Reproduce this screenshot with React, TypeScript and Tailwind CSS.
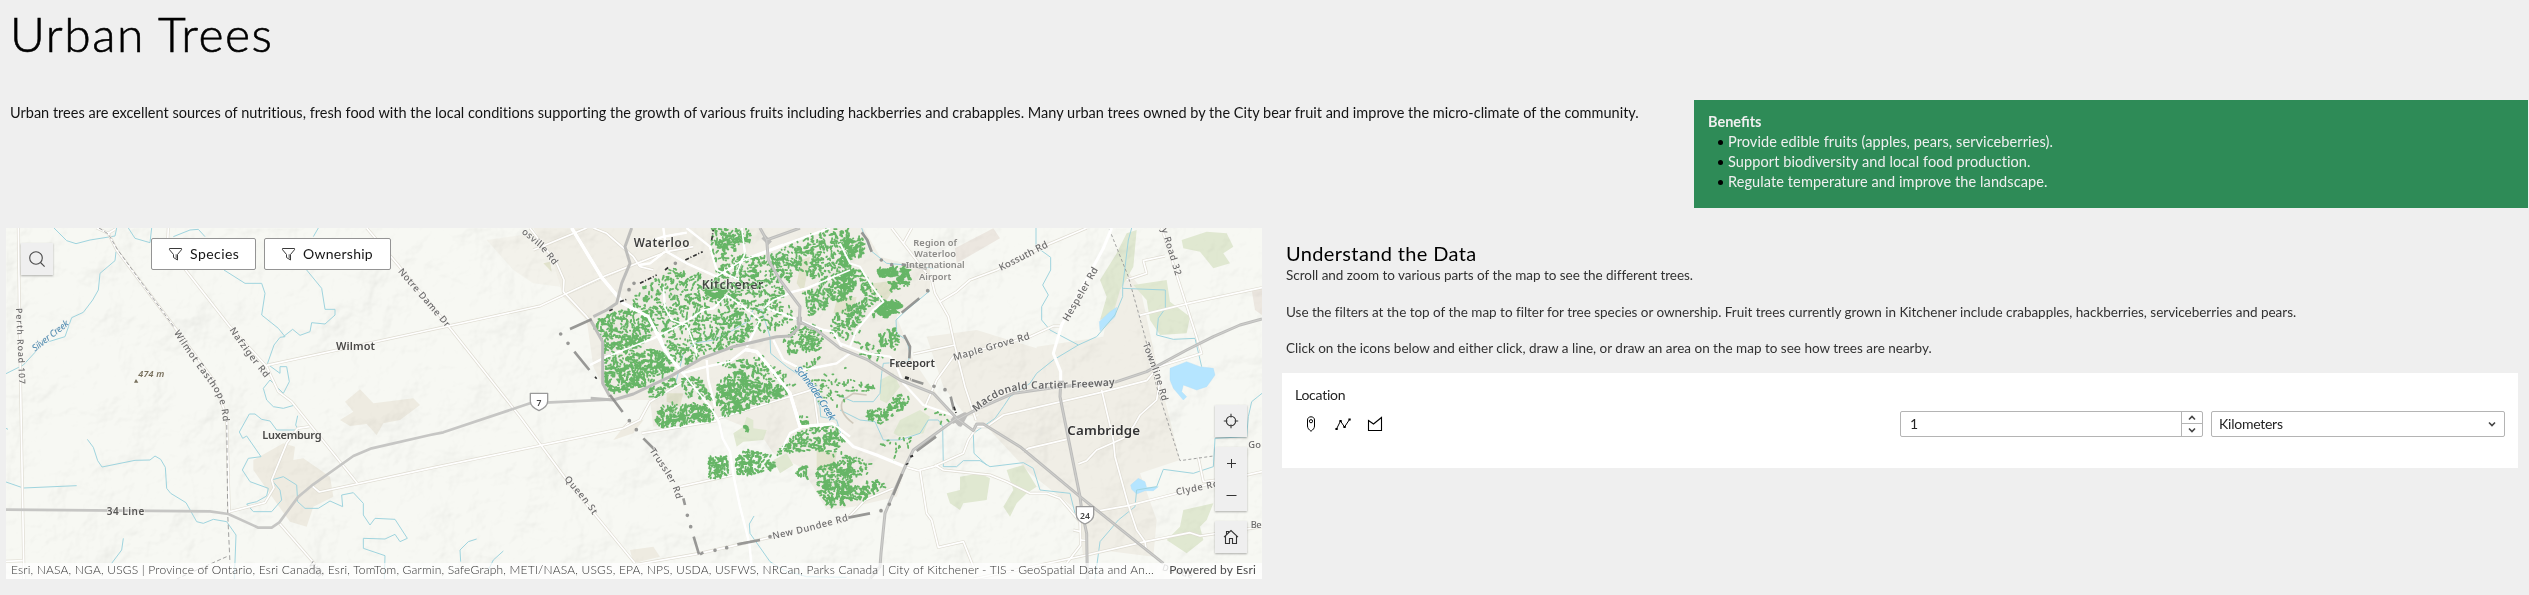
import React from "react";

type Poly = { dx?: number; d: number; p: number[] };

const TREE_AREAS: Poly[] = [
  { d: 19, p: [512, 298, 600, 273, 690, 262, 718, 330, 640, 395, 555, 408, 545, 355] },
  { d: 26, p: [555, 415, 690, 385, 740, 400, 765, 445, 690, 490, 590, 527, 555, 500] },
  { d: 26, p: [680, 512, 765, 470, 768, 500, 700, 537] },
  { d: 11, p: [640, 225, 700, 180, 760, 145, 850, 165, 885, 190, 870, 290, 740, 330, 700, 280, 640, 262] },
  { d: 13, p: [720, 330, 870, 290, 965, 260, 1000, 330, 960, 380, 860, 400, 790, 440, 750, 410] },
  { d: 32, p: [855, 210, 880, 195, 925, 205, 900, 240, 865, 240] },
  { d: 19, p: [875, 24, 990, 24, 995, 60, 940, 70, 900, 100, 870, 70] },
  { d: 10, p: [860, 80, 980, 60, 985, 110, 900, 150] },
  { d: 12, p: [890, 150, 960, 110, 1050, 110, 1060, 170, 1100, 220, 1060, 270, 1000, 290, 900, 280, 870, 210] },
  { d: 6, p: [960, 280, 1100, 240, 1140, 300, 1040, 340, 960, 350] },
  { d: 15, p: [1050, 100, 1140, 60, 1220, 24, 1290, 30, 1290, 170, 1200, 190, 1130, 150, 1090, 210, 1050, 150] },
  { d: 19, p: [1150, 220, 1290, 150, 1300, 230, 1240, 250, 1170, 290] },
  { d: 11, p: [1250, 280, 1340, 230, 1320, 340, 1260, 370, 1220, 330] },
  { dx: 1260, d: 28, p: [0, 60, 70, 52, 82, 95, 20, 130, 0, 110] },
  { dx: 1260, d: 18, p: [0, 130, 60, 140, 90, 190, 140, 240, 90, 260, 60, 200, 0, 240] },
  { dx: 1260, d: 12, p: [20, 250, 90, 250, 60, 300, 20, 330] },
  { dx: 1260, d: 50, p: [110, 150, 200, 138, 214, 180, 180, 186, 160, 165, 120, 175] },
  { dx: 1260, d: 18, p: [140, 185, 210, 180, 200, 205, 150, 215] },
  { dx: 1260, d: 70, p: [95, 285, 130, 250, 180, 240, 190, 262, 140, 295] },
  { dx: 1260, d: 26, p: [115, 350, 160, 323, 180, 350, 165, 390, 120, 375] },
  { dx: 1260, d: 8, p: [30, 350, 120, 380, 135, 420, 70, 418] },
  { d: 16, p: [1085, 370, 1120, 320, 1180, 310, 1220, 350, 1200, 390, 1150, 400, 1100, 400] },
  { d: 16, p: [1130, 440, 1200, 410, 1200, 425, 1150, 455] },
  { d: 28, p: [890, 490, 950, 450, 1010, 480, 1095, 500, 1105, 525, 920, 590, 890, 570] },
  { d: 15, p: [780, 480, 830, 460, 880, 540, 800, 530] },
  { d: 12, p: [890, 430, 1030, 410, 1130, 500, 1010, 480] },
  { d: 28, p: [705, 600, 730, 555, 870, 550, 888, 600, 720, 624] },
  { d: 34, p: [865, 715, 920, 705, 928, 765, 870, 778] },
  { d: 28, p: [945, 725, 980, 685, 1060, 710, 1060, 755, 950, 765] },
  { d: 20, p: [1065, 705, 1110, 650, 1150, 625, 1250, 615, 1275, 660, 1240, 705, 1180, 690, 1110, 700] },
  { d: 22, p: [1190, 745, 1290, 710, 1300, 840, 1220, 868, 1190, 800] },
  { dx: 1260, d: 14, p: [0, 700, 80, 720, 100, 750, 30, 790] },
  { dx: 1260, d: 26, p: [0, 790, 50, 800, 110, 775, 132, 800, 70, 842, 0, 830] },
  { d: 34, p: [1138, 588, 1168, 592, 1165, 622, 1142, 615] },
  { d: 34, p: [1132, 742, 1160, 740, 1162, 775, 1135, 770] },
  { d: 50, p: [972, 618, 986, 620, 985, 636, 972, 634] },
  { dx: 1260, d: 44, p: [80, 570, 150, 560, 160, 590, 120, 612, 90, 600] },
  { dx: 1260, d: 24, p: [140, 560, 180, 520, 212, 530, 190, 575] },
  { dx: 1260, d: 8, p: [10, 480, 50, 480, 110, 500, 100, 515, 20, 512] },
  { dx: 1260, d: 4, p: [100, 670, 240, 640, 160, 725] },
  { dx: 1260, d: 4, p: [250, 560, 340, 590, 320, 620] },
  { d: 2, p: [1160, 480, 1280, 480, 1270, 560, 1200, 560] },
  { d: 3, p: [1150, 470, 1290, 440, 1290, 530, 1200, 540] },
];

function rng(seed: number) {
  let s = seed;
  return () => {
    s = (s + 0x6d2b79f5) | 0;
    let t = Math.imul(s ^ (s >>> 15), 1 | s);
    t = (t + Math.imul(t ^ (t >>> 7), 61 | t)) ^ t;
    return ((t ^ (t >>> 14)) >>> 0) / 4294967296;
  };
}

function hash(x: number, y: number) {
  const v = Math.sin(x * 127.1 + y * 311.7) * 43758.5453;
  return v - Math.floor(v);
}

function noise(x: number, y: number) {
  const s = 18;
  const gx = Math.floor(x / s);
  const gy = Math.floor(y / s);
  let fx = x / s - gx;
  let fy = y / s - gy;
  fx = fx * fx * (3 - 2 * fx);
  fy = fy * fy * (3 - 2 * fy);
  const a = hash(gx, gy) * (1 - fx) + hash(gx + 1, gy) * fx;
  const b = hash(gx, gy + 1) * (1 - fx) + hash(gx + 1, gy + 1) * fx;
  return a * (1 - fy) + b * fy;
}

function inside(p: number[], x: number, y: number) {
  let r = false;
  for (let i = 0, j = p.length - 2; i < p.length; j = i, i += 2) {
    if (p[i + 1] > y !== p[j + 1] > y && x < ((p[j] - p[i]) * (y - p[i + 1])) / (p[j + 1] - p[i + 1]) + p[i]) r = !r;
  }
  return r;
}

function treePath() {
  const rand = rng(7);
  const out: string[] = [];
  for (const { dx = 0, d, p } of TREE_AREAS) {
    const xs = p.filter((_, i) => i % 2 === 0);
    const ys = p.filter((_, i) => i % 2 === 1);
    const x0 = Math.min(...xs);
    const y0 = Math.min(...ys);
    const w = Math.max(...xs) - x0;
    const h = Math.max(...ys) - y0;
    const n = Math.round((w * h * d * 1.75) / 1000);
    for (let i = 0; i < n; i++) {
      const x = x0 + rand() * w;
      const y = y0 + rand() * h;
      if (!inside(p, x, y)) continue;
      const gx = noise(x + 1, y) - noise(x - 1, y);
      const gy = noise(x, y + 1) - noise(x, y - 1);
      const v = Math.abs(noise(x, y) - 0.5);
      if (v > 0.16 && rand() > 0.32) continue;
      const m = Math.hypot(gx, gy) || 1;
      const len = 0.5 + rand() * 8;
      out.push(`M${(x + dx).toFixed(1)} ${y.toFixed(1)}l${((-gy / m) * len).toFixed(1)} ${((gx / m) * len).toFixed(1)}`);
    }
  }
  return out.join("");
}

const TREES = treePath();

const MINOR_W = [
  "M55 24L60 400L72 1077",
  "M290 24L325 40L350 90L440 210L530 330L640 480L680 590L688 880",
  "M325 40L345 28",
  "M505 24L502 80L690 320L800 440L835 515L875 545L1072 790",
  "M800 436L1290 330L1620 258L1680 230L1930 120",
  "M690 875L795 848L822 803L815 780L860 670L893 625L928 620",
  "M935 797L958 816L1290 745L1870 625L1890 605",
  "M840 912L960 1050",
  "M1100 24L1190 130L1345 318L1560 590L1700 780L1905 1030",
  "M18 1024L68 1022",
];

const MINOR_C = [
  "M340 90L500 24M330 24L410 130L432 180L430 215L500 290L548 350",
  "M430 225L545 172L740 95L820 80",
  "M520 24L560 40L600 75L640 110L660 140L700 150",
  "M780 800L940 765",
  "M840 1000L640 1035M840 1000L1060 950",
  "M665 640L890 602",
  "M610 625L660 600L690 545L800 480",
  "M895 595L1180 508L1195 618",
];

const MINOR_E = [
  "M155 24L190 70L215 24M190 70L275 180L285 220L325 290L345 380L375 500L408 600",
  "M300 245L350 215L390 180L470 150L620 75L740 24",
  "M255 560L290 480L340 410L570 350L640 318L660 318",
  "M220 402L345 375",
  "M400 620L440 620L490 585L780 518L920 482L955 440L1085 400L1060 320L965 24",
  "M895 287L1045 250L1266 203",
  "M860 180L920 160L910 122L975 108",
  "M550 695L565 685L680 658",
  "M715 732L740 722L770 690L850 655L880 620L900 585L950 540L960 480",
  "M785 510L820 660L825 710L865 855L890 930L915 965L918 985",
  "M780 872L865 857L1010 820L1130 785L1266 755",
  "M740 1005L915 965L1050 938L1080 948L1266 920",
  "M740 1005L600 1035L400 1077",
  "M240 752L260 880L275 900L295 982L370 965L400 1040",
  "M200 742L235 752L280 740L370 700L385 660L405 630M285 735L310 750L450 765L500 785L570 820L620 820L660 835L720 905L722 975L680 1030",
  "M18 900L75 840L160 805",
  "M700 930L722 935M722 960L740 962",
  "M1075 712L1090 785L1130 780",
];

const MAJOR_C = [
  "M455 24L545 172L610 250L685 290L720 350L740 400L785 455L870 560L897 605L908 655L930 695L940 765L960 860L988 970L995 1040",
  "M730 24L740 95L800 130L890 170L960 125L1090 75L1230 24",
  "M800 24L870 80L890 150L960 180",
  "M700 60L730 50L800 38",
  "M655 135L690 130L735 95",
  "M510 435L560 410L700 355L790 310L850 270L880 265L920 225L970 260L1020 300L980 380",
  "M730 200L735 265L755 300L800 315L825 380L830 410",
  "M785 460L860 440L930 425L975 390L1010 395L1060 455L1110 520L1130 580L1140 620L1240 612L1290 650",
  "M860 420L865 480L885 560",
  "M965 24L975 100L950 160",
  "M1040 265L1110 290L1210 330L1240 335L1265 380",
  "M1030 265L1060 240L1120 215L1160 205L1290 150",
  "M1060 360L1090 420L1150 450L1250 430L1290 400",
  "M1145 622L1110 640L1085 690",
];

const MAJOR_E = [
  "M815 24L790 85L665 315L640 400L662 455L662 500",
  "M0 370L80 400L150 410L170 440L190 490L250 555L350 590",
  "M0 640L40 680L110 705L190 738",
  "M30 380L50 330L100 270L130 245L90 190L60 140L30 130L0 70",
];

const STREAMS = [
  "M162 24L200 62L228 71L270 60L345 48L350 24M348 95L345 122L300 160L295 210L278 240L250 277L215 293L195 350L130 370L70 435L18 461",
  "M262 658L280 682L293 722L306 741L405 721L450 720L465 708L482 718L496 742L500 805L512 820L558 848L590 905L610 910L640 898L680 905L708 945L703 1077",
  "M18 786L70 804L230 797M370 955L365 990L335 1030M18 625L24 628",
  "M385 24L405 55L450 68L455 24M520 50L570 30L595 28L615 50M955 24L940 50M672 150L735 190L785 190L795 220L785 285L835 325L855 350L840 352L822 375L802 432L840 460L840 440L860 440L868 485L850 520L810 480L790 505L800 540L820 560L850 565L885 555",
  "M920 150L965 205L975 268L1005 268L1005 285L975 312L935 308L930 335L900 346L878 328L850 350",
  "M893 587L887 615L895 630L830 630L810 603L785 598L765 582L748 582L718 636L728 655L740 648L783 710L745 715L727 750L750 785L805 805L800 828L770 845L740 852L760 875L815 875L845 840L840 810L815 780L850 770L890 795L893 845L915 865L955 865L990 843L1028 860L1025 825L1060 818L1090 850L1090 885L1110 915L1125 895L1185 898L1222 955L1200 965L1185 943L1155 957L1090 955L1090 985L1155 1007L1153 1077",
  "M1430 957L1405 965L1380 990L1382 1025M1510 993L1480 1020L1465 1050M2262 888L2248 912L2250 940L2310 1025L2350 1050L2420 1070L2540 1072",
  "M2285 270L2260 265L2250 300L2200 330L2140 360L2080 370L2050 400L2040 440L2025 495M2285 270L2310 350L2312 400L2360 440L2420 480L2460 560L2462 590L2510 600L2525 650",
  "M2585 24L2610 90L2660 130L2720 135L2800 145",
  "M2790 212L2720 270L2688 300L2690 340L2720 360L2730 400L2725 425L2650 430L2645 460L2640 520L2620 545L2560 545L2525 530",
  "M2520 570L2580 600L2625 605L2650 660L2700 660L2760 640L2785 600L2815 600L2828 620L2830 740L2870 740L2890 722L2940 722L2970 740L3070 728L3100 745L3120 810L3210 820L3225 880",
  "M3108 24L3108 80L3152 112L3152 150L3128 195L3145 225L3125 260L3125 300L3150 330L3235 375L3290 350L3345 285L3368 230L3368 200L3385 60L3395 24M3235 375L3160 420L3110 460L3090 490L3030 530L3010 560L2985 595L2920 640L2922 700L2960 735",
  "M3368 205L3496 210L3496 265L3475 295L3470 345L3520 358L3585 355L3605 440M3786 520L3755 545L3745 590L3740 650L3645 655L3640 740L3580 760L3490 748L3470 800L3410 810L3405 860L3355 900L3330 930L3300 965L3285 1077",
];

const GREYS = [
  "M1772 535L1840 540L1900 522L2010 470L2105 415L2200 380L2330 350L2370 348L2395 325L2400 300",
  "M1895 24L1875 80L1890 130L1865 190L1850 250L1820 270L1780 290",
  "M1770 297L1808 365L1808 490L1830 530",
  "M2280 24L2300 60L2305 120L2340 180L2400 260L2398 305L2450 330L2520 385L2600 418L2700 480L2800 520L2870 595L2920 632L2930 612L2950 612L3060 680L3240 830L3490 1030",
  "M2300 60L2400 24",
  "M2870 600L2930 568L3040 520L3180 500L3350 485L3440 455L3560 390L3640 350L3720 315L3786 297",
  "M3182 490L3180 530L3240 830L3245 870L3260 940L3262 1077",
  "M2870 595L2740 690L2720 730L2680 820L2655 880L2643 1000L2640 1040L2610 1077",
];

function Roads({ paths, inner, outer }: { paths: string[]; inner: number; outer: number }) {
  return (
    <>
      <g stroke="#dfdcd2" strokeWidth={outer}>
        {paths.map((d) => <path key={d} d={d} />)}
      </g>
      <g stroke="#fff" strokeWidth={inner}>
        {paths.map((d) => <path key={d} d={d} />)}
      </g>
    </>
  );
}

type LabelProps = { x: number; y: number; len: number; size: number; bold?: boolean; color?: string; rot?: number; italic?: boolean; children: string };

function Label({ x, y, len, size, bold, color = "#6b6b6b", rot = 0, italic, children }: LabelProps) {
  return (
    <text
      x={x}
      y={y}
      textLength={len}
      fontSize={size}
      fontWeight={bold ? 600 : 500}
      fontStyle={italic ? "italic" : "normal"}
      fill={color}
      stroke="#f7f6f1"
      strokeWidth="5"
      strokeOpacity="0.75"
      paintOrder="stroke"
      strokeLinejoin="round"
      transform={`rotate(${rot} ${x} ${y})`}
    >
      {children}
    </text>
  );
}

function CurvedLabel({ id, d, len, size, bold, color = "#6b6b6b", italic, children }: { id: string; d: string; len: number; size: number; bold?: boolean; color?: string; italic?: boolean; children: string }) {
  return (
    <>
      <path id={id} d={d} fill="none" />
      <text
        fontSize={size}
        fontWeight={bold ? 600 : 500}
        fontStyle={italic ? "italic" : "normal"}
        fill={color}
        stroke="#f7f6f1"
        strokeWidth="5"
        strokeOpacity="0.75"
        paintOrder="stroke"
        strokeLinejoin="round"
        textLength={len}
      >
        <textPath href={`#${id}`}>{children}</textPath>
      </text>
    </>
  );
}

function Shield({ x, y, children }: { x: number; y: number; children: string }) {
  return (
    <g transform={`translate(${x} ${y})`}>
      <path d="M-26 -26H26V-2C26 12 14 20 0 26C-14 20 -26 12 -26 -2Z" fill="#fff" stroke="#9a9a9a" strokeWidth="4" />
      <text y="11" textAnchor="middle" fontSize="26" fontWeight="600" fill="#444">{children}</text>
    </g>
  );
}

function BaseMap() {
  return (
    <svg viewBox="18 24 3768 1053" className="block h-[351px] w-[1256px] font-['Noto_Sans',sans-serif]" fill="none" strokeLinejoin="round">
      <defs>
        <filter id="relief" x="0" y="0" width="100%" height="100%">
          <feTurbulence type="fractalNoise" baseFrequency="0.0045" numOctaves="5" seed="11" />
          <feDiffuseLighting surfaceScale="46" diffuseConstant="1.15" lightingColor="#ffffff">
            <feDistantLight azimuth="225" elevation="60" />
          </feDiffuseLighting>
        </filter>
      </defs>
      <rect x="18" y="24" width="3768" height="1053" fill="#f7f8f3" />

      <g fill="#f0eee6">
        <path d="M1600 24H2590L2640 110L2790 150L2790 210L2690 290L2740 420L2780 480L2860 590L2730 700L2690 830L2560 860L2480 870L2440 800L2400 740L2320 700L2280 640L2160 590L1960 620L1950 540L1830 540L1780 440L1760 300L1690 230L1660 130Z" />
        <path d="M3110 380L3310 350L3350 110L3420 200L3480 480L3540 720L3420 760L3470 900L3460 1010L3300 990L3250 1010L3230 870L3090 760L2960 620L2920 600L2960 560L3100 540Z" />
        <path d="M2780 350L2930 330L3060 370L3160 400L3160 540L2900 590L2830 500Z" />
        <path d="M1460 60L1600 40L1660 110L1680 200L1600 190L1540 150Z" opacity="0.6" />
      </g>
      <g fill="#eeebe1">
        <path d="M760 720L850 670L885 680L880 720L910 715L990 770L1000 830L940 860L920 920L870 905L830 850L760 750Z" />
        <path d="M1020 600L1060 575L1035 545L1080 508L1120 550L1240 535L1260 555L1200 600L1150 610L1130 645L1100 612L1050 618Z" />
        <path d="M1840 660L1900 640L1930 600L1880 610ZM1890 990L1960 980L1980 1010L1900 1030Z" />
        <path d="M2865 85L2980 25L3000 55L2870 130ZM3755 210L3786 205V285L3765 270Z" fill="#ece7e0" />
      </g>
      <g fill="#e0e8d1">
        <path d="M3545 60L3620 35L3680 40L3700 80L3670 100L3690 130L3640 145L3600 95L3550 85Z" />
        <path d="M3400 195L3500 180L3510 245L3570 290L3560 340L3480 345L3450 300L3440 240Z" />
        <path d="M3380 40L3410 30L3400 140L3360 210L3340 280L3300 300L3320 230L3300 180L3350 100Z" />
        <path d="M2880 770L2940 760L2970 775L2960 840L2890 850L2880 870L2850 850L2840 820L2880 810ZM3020 750L3070 735L3110 800L3080 820L3050 850L3030 890L3010 860L3040 810Z" />
        <path d="M3550 870L3640 850L3620 900L3600 920L3610 960L3560 1000L3500 960L3540 920ZM2700 600L2760 570L2790 590L2770 640L2700 650L2680 640Z" />
        <path d="M2240 590L2260 600L2260 625L2300 630L2290 660L2230 665L2210 680L2200 640L2230 620ZM2320 720L2360 700L2380 735L2340 760ZM2640 480L2680 460L2700 500L2660 550L2640 540Z" />
        <path d="M2430 110L2410 220L2390 190L2405 120ZM2510 240L2570 230L2560 280L2500 280ZM2620 190L2700 180L2660 240L2600 210Z" fill="#e2e3cd" />
        <path d="M2450 690L2510 700L2500 760L2450 745ZM2000 520L2050 520L2040 560L2000 545ZM1630 130L1650 125L1655 155Z" fill="#e2e3cd" />
      </g>
      <rect x="18" y="24" width="3768" height="1053" filter="url(#relief)" className="opacity-[0.12] mix-blend-multiply" />

      <g fill="#b5e5ff" stroke="#a9dcf7" strokeWidth="1">
        <path d="M3510 445L3560 425L3600 440L3640 445L3645 465L3620 500L3590 510L3550 495L3545 515L3560 530L3550 540L3520 505L3510 480Z" />
        <path d="M3298 305L3330 275L3350 262L3345 290L3300 333Z" />
        <path d="M3392 795L3415 775L3435 785L3440 803L3475 800L3460 812L3435 812L3410 822L3395 808Z" />
      </g>
      <g stroke="#9fd4de" strokeWidth="3">
        {STREAMS.map((d) => <path key={d} d={d} />)}
      </g>
      <path d="M2530 540L2560 520L2600 525M2530 540C2515 560 2530 590 2560 610" stroke="#cfc9bc" strokeWidth="5" />

      <Roads paths={MINOR_W} inner={5} outer={9} />
      <g transform="translate(1260 0)"><Roads paths={MINOR_C} inner={5} outer={9} /></g>
      <g transform="translate(2520 0)"><Roads paths={MINOR_E} inner={5} outer={9} /></g>
      <g stroke="#909090" strokeWidth="2.5" strokeDasharray="12 7">
        <path d="M297 24L325 42L352 88L525 325" />
        <path d="M680 592L683 880L690 1030" strokeDasharray="14 9" />
        <path d="M530 1077L680 1010" />
        <path d="M3328 28L3385 170L3435 350L3470 500L3540 722L3640 708" strokeDasharray="9 7" />
      </g>

      <g stroke="#c6c6c4" strokeWidth="8">
        <path d="M18 869L630 874L685 882L775 923L815 923L838 907L895 830L940 793L1060 708L1115 685L1290 645L1330 637L1590 550L1840 538" />
      </g>

      <g transform="translate(1260 0)">
        <g stroke="#fff" strokeWidth="7">
          {MAJOR_C.map((d) => <path key={d} d={d} />)}
          <path d="M455 24L545 172L610 250L685 290L740 400L785 455M975 388L1010 395L1060 455L1110 520L1140 620L1240 612M890 170L960 125L1090 75" strokeWidth="10" />
        </g>
        <path d={TREES} stroke="#66b566" strokeWidth="5.4" strokeLinecap="round" />
        <path d="M1150 325L1135 370M1162 325L1140 385M1174 328L1150 390M1186 332L1164 388M1198 336L1178 380M1210 345L1195 378" stroke="#66b566" strokeWidth="5" strokeDasharray="6 2" />
        <g stroke="#fff" strokeWidth="5">
          {MAJOR_C.map((d) => <path key={d} d={d} />)}
          <path d="M455 24L545 172L610 250L685 290L740 400L785 455M975 388L1010 395L1060 455L1110 520L1140 620L1240 612" strokeWidth="9" />
        </g>
        <g opacity="0.85">
          <Label x={845} y={208} len={185} size={37} color="#333" bold>Kitchener</Label>
        </g>
        <path d="M890 206L905 218L880 232M935 192L950 204M985 196L1002 190M960 180L966 186M1012 204L1020 196" stroke="#66b566" strokeWidth="6" strokeLinecap="round" />
      </g>
      <g transform="translate(2520 0)" stroke="#fff" strokeWidth="9">
        <path d={MAJOR_E[0]} />
        <path d={MAJOR_E[1]} strokeWidth="7" />
        <path d={MAJOR_E[2]} />
        <path d={MAJOR_E[3]} strokeWidth="6" />
      </g>
      <g stroke="#bdbdbb" strokeWidth="9">
        {GREYS.map((d) => <path key={d} d={d} />)}
        <path d="M2855 605L2895 585L2880 612L2860 590M2398 290V315M3175 490H3192M2290 50L2310 70" strokeWidth="16" />
      </g>
      <g stroke="#cfcfcd" strokeWidth="3">
        {GREYS.slice(3).map((d) => <path key={d} d={d} />)}
      </g>

      <g stroke="#8e8e8c" strokeWidth="8" opacity="0.9">
        <path d="M1710 327L1775 298M1723 395L1768 450M1830 525L1868 576M1930 655L1965 690M2050 835L2055 855M2081 950L2097 1003M2212 973L2280 960M2110 997L2100 1003" />
        <path d="M2585 37L2602 60L2615 95M2705 278L2758 235M2712 345L2730 380L2728 415M2735 480L2770 491M2852 530L2862 570M2750 693L2808 650M2680 825L2706 762M2545 893L2610 880M2705 133L2780 145" />
        <path d="M1682 342h.1M1704 370h.1M1888 602h.1M1909 629h.1M2062 886h.1M2072 920h.1M2145 991h.1M2180 983h.1M2310 950h.1M2644 120h.1M2675 134h.1M2783 212h.1M2802 499h.1M2835 509h.1M2643 872h.1M2668 853h.1M1902 190h.1M1887 209h.1M2026 130h.1" strokeWidth="11" strokeLinecap="round" />
      </g>
      <g stroke="#333" strokeWidth="5" strokeDasharray="12 5 3 6">
        <path d="M2056 120L2108 95M1920 190L1970 165M1995 150L2005 142M1860 245L1880 238M1828 272L1838 268M1785 470L1790 476M2862 560L2870 585M2135 60L2140 30" />
        <path d="M2715 472L2732 478M2734 706L2736 712M2720 730L2722 734M2690 430L2695 445" strokeWidth="9" />
      </g>

      <Label x={48} y={265} len={228} size={26} rot={87.5}>Perth Road 107</Label>
      <Label x={105} y={395} len={132} size={28} rot={-38} color="#5c93b5" italic>Silver Creek</Label>
      <Label x={415} y={470} len={78} size={27} color="#77705c" bold italic>474 m</Label>
      <path d="M402 488L408 477L415 488Z" fill="#77705c" />
      <CurvedLabel id="wilmotRd" d="M521 338C560 400 590 440 620 480C650 520 668 545 670 625" len={310} size={28}>Wilmot Easthope Rd</CurvedLabel>
      <CurvedLabel id="nafziger" d="M688 330C720 380 760 430 810 492" len={180} size={28}>Nafziger Rd</CurvedLabel>
      <CurvedLabel id="notreDame" d="M1193 155L1340 325L1400 400" len={222} size={28}>Notre Dame Dr</CurvedLabel>
      <Label x={1008} y={391} len={117} size={33} bold color="#4a4a48">Wilmot</Label>
      <Label x={787} y={657} len={178} size={33} bold color="#4a4a48">Luxemburg</Label>
      <Label x={320} y={885} len={113} size={30} bold color="#565654">34 Line</Label>
      <Label x={925} y={1034} len={50} size={26} rot={50} color="#999">Wall</Label>

      <Label x={1901} y={80} len={167} size={35} bold color="#3d3d3c">Waterloo</Label>
      <CurvedLabel id="osville" d="M1564 38L1620 85L1680 160" len={138} size={28}>osville Rd</CurvedLabel>
      <CurvedLabel id="queen" d="M1692 778L1750 845L1805 922" len={138} size={28}>Queen St</CurvedLabel>
      <CurvedLabel id="trussler" d="M1948 692C1985 750 2025 790 2034 865" len={168} size={28}>Trussler Rd</CurvedLabel>
      <CurvedLabel id="dundee" d="M2320 958L2420 935L2575 894" len={232} size={28}>New Dundee Rd</CurvedLabel>
      <CurvedLabel id="schneider" d="M2383 450C2430 500 2460 550 2505 630" len={188} size={30} color="#4a8cb5" italic>Schneider Creek</CurvedLabel>
      <Shield x={1617} y={546}>7</Shield>

      <g transform="translate(2520 0)">
        <Label x={220} y={79} len={131} size={28} color="#8b8b88" bold>Region of</Label>
        <Label x={222} y={112} len={126} size={28} color="#8b8b88" bold>Waterloo</Label>
        <Label x={197} y={145} len={177} size={28} color="#8b8b88" bold>International</Label>
        <Label x={237} y={179} len={97} size={28} color="#8b8b88" bold>Airport</Label>
        <Label x={483} y={153} len={160} size={29} rot={-27}>Kossuth Rd</Label>
        <Label x={684} y={306} len={182} size={29} rot={-60}>Hespeler Rd</Label>
        <Label x={343} y={422} len={237} size={29} rot={-16}>Maple Grove Rd</Label>
        <Label x={964} y={28} len={146} size={28} rot={73}>y Road 32</Label>
        <CurvedLabel id="townline" d="M908 372L945 470L975 575" len={182} size={28}>Townline Rd</CurvedLabel>
        <Label x={148} y={442} len={137} size={33} bold color="#3d3d3c">Freeport</Label>
        <CurvedLabel id="macdonald" d="M408 577C470 520 520 508 590 506C680 505 760 502 850 494" len={436} size={31} bold color="#666">Macdonald Cartier Freeway</CurvedLabel>
        <Label x={682} y={646} len={218} size={40} color="#333" bold>Cambridge</Label>
        <Label x={1010} y={826} len={130} size={28} rot={-12}>Clyde Rd</Label>
        <Label x={1225} y={685} len={38} size={28}>Go</Label>
        <Label x={1232} y={924} len={33} size={28}>Be</Label>
        <Label x={965} y={1050} len={95} size={26} rot={16} color="#999">Dunde</Label>
        <Shield x={735} y={886}>24</Shield>
      </g>
    </svg>
  );
}

function FilterButton({ label, width }: { label: string; width: string }) {
  return (
    <button className={`flex h-8 items-center rounded-[2px] border border-[#949494] bg-white pl-[15px] text-[14px] text-[#151515] ${width}`}>
      <svg width="16" height="16" viewBox="0 0 16 16" fill="none" stroke="#3a3a3a" className="mr-[7px]">
        <path d="M2.5 2.5H14.5V3.7L10.5 8.5V14L6.5 11.5V8.5L2.5 3.7Z" />
        <path d="M9.2 8.2V12.4" strokeWidth="1.4" stroke="#8a8a8a" />
      </svg>
      <span className="leading-[30px]">{label}</span>
    </button>
  );
}

const mapButton = "flex size-8 items-center justify-center bg-[#efefef] shadow-[0_1px_2px_rgba(0,0,0,0.3)]";

function MapPanel() {
  return (
    <div className="relative h-[351px] w-[1256px] overflow-hidden">
      <BaseMap />
      <button className={`absolute left-[15px] top-[15px] ${mapButton}`}>
        <svg width="16" height="16" viewBox="0 0 16 16" fill="none" stroke="#4a4a4a" strokeWidth="1.1">
          <circle cx="7" cy="7" r="6.3" />
          <path d="M11.5 11.5L15.6 15.6" />
        </svg>
      </button>
      <div className="absolute left-[145px] top-[10px] flex gap-2">
        <FilterButton label="Species" width="w-[105px] tracking-[0.45px]" />
        <FilterButton label="Ownership" width="w-[127px] tracking-[0.27px]" />
      </div>
      <div className="absolute left-[1209px] top-[177px] flex w-8 flex-col">
        <button className={mapButton}>
          <svg width="16" height="16" viewBox="0 0 16 16" fill="none" stroke="#3a3a3a" strokeWidth="1.1">
            <circle cx="8" cy="8" r="4.7" />
            <path d="M8 .8V4.5M8 11.5V15.2M.8 8H4.5M11.5 8H15.2" />
          </svg>
        </button>
        <div className="mt-[10px] flex flex-col shadow-[0_1px_2px_rgba(0,0,0,0.3)]">
          <button className="flex size-8 items-center justify-center bg-[#efefef]">
            <svg width="16" height="16" viewBox="0 0 16 16" stroke="#333"><path d="M8.5 4V13M4 8.5H13" /></svg>
          </button>
          <button className="flex size-8 items-center justify-center bg-[#efefef]">
            <svg width="16" height="16" viewBox="0 0 16 16" stroke="#333"><path d="M3.5 8.5H13.5" /></svg>
          </button>
        </div>
        <button className={`mt-[10px] ${mapButton}`}>
          <svg width="16" height="16" viewBox="0 0 16 16" fill="none" stroke="#333" strokeWidth="1.1">
            <path d="M1 8.2L8 1.5L15 8.2M2.5 7V14.5H6.5V9.5H9.5V14.5H13.5V7M3.5 5.7V2.5H5.5V3.8" />
          </svg>
        </button>
      </div>
      <div className="absolute bottom-0 left-0 flex h-4 w-full justify-between bg-white/70 pl-[5px] pr-[6px] text-[12px] leading-[14px] text-[#4c4c4c]">
        <span className="whitespace-nowrap font-light tracking-[0.178px] text-[#333]">
          Esri, NASA, NGA, USGS | Province of Ontario, Esri Canada, Esri, TomTom, Garmin, SafeGraph, METI/NASA, USGS, EPA, NPS, USDA, USFWS, NRCan, Parks Canada | City of Kitchener - TIS - GeoSpatial Data and An...
        </span>
        <span className="whitespace-nowrap tracking-[0.158px]">Powered by Esri</span>
      </div>
    </div>
  );
}

function Chevron({ up }: { up?: boolean }) {
  return (
    <svg width="8" height="6" viewBox="0 0 8 6" fill="none" stroke="#444" strokeWidth="1.6">
      <path d={up ? "M1 4.5L4 1.5L7 4.5" : "M1 1.5L4 4.5L7 1.5"} />
    </svg>
  );
}

function LocationCard() {
  return (
    <div className="mt-4 h-[95px] w-[1236px] bg-white text-[14px] text-[#242424]">
      <div className="h-[38px] pl-[13px] pt-[12px] leading-5 tracking-[-0.25px]">Location</div>
      <div className="flex items-center">
        <div className="flex w-[618px] items-center gap-4 pl-[21px]">
          <svg width="16" height="16" viewBox="0 0 16 16" fill="none" stroke="#000">
            <path d="M8 15.3C6 13.6 4.5 12.3 4.5 10V4C4.5 2 6 .8 8 .8S11.5 2 11.5 4V10C11.5 12.3 10 13.6 8 15.3Z" />
            <circle cx="8" cy="5.2" r="1.6" />
          </svg>
          <svg width="16" height="16" viewBox="0 0 16 16" fill="none" stroke="#000">
            <path d="M1.5 13L5.5 5L9.5 11L14.5 3.5" />
            <path d="M1.5 13h.1M5.5 5h.1M9.5 11h.1M14.5 3.5h.1" strokeWidth="2.2" strokeLinecap="square" />
          </svg>
          <svg width="16" height="16" viewBox="0 0 16 16" fill="none" stroke="#000" strokeWidth="1.1">
            <path d="M1.5 4.5L6.5 8L14.5 1.5V14.5H1.5Z" />
          </svg>
        </div>
        <div className="flex h-[26px] w-[303px] rounded-[2px] border border-[#b4b4b4]">
          <span className="flex-1 pl-[9px] leading-6">1</span>
          <div className="flex w-[21px] flex-col border-l border-[#b4b4b4]">
            <span className="flex h-3 items-center justify-center border-b border-[#b4b4b4]"><Chevron up /></span>
            <span className="flex h-3 items-center justify-center"><Chevron /></span>
          </div>
        </div>
        <div className="ml-2 flex h-[26px] w-[294px] items-center justify-between rounded-[2px] border border-[#b4b4b4] pl-[7px] pr-2">
          <span className="leading-6 tracking-[-0.25px]">Kilometers</span>
          <Chevron />
        </div>
      </div>
    </div>
  );
}

export default function App() {
  return (
    <main className="h-[595px] w-[2529px] overflow-hidden bg-[#efefef] font-['Lato',sans-serif]">
      <h1 className="h-[67px] pl-[10px] text-[48px] font-light leading-[68px] tracking-[1.5px] text-black [-webkit-text-stroke:0.6px_black]">Urban Trees</h1>

      <section className="mt-[33px] flex h-[108px]">
        <p className="w-[1694px] whitespace-nowrap pl-[10px] pt-[3px] text-[14.5px] leading-5 tracking-[0.01px] text-[#141414]">
          Urban trees are excellent sources of nutritious, fresh food with the local conditions supporting the growth of various fruits including hackberries and crabapples. Many urban trees owned by the City bear fruit and improve the micro-climate of the community.
        </p>
        <div className="w-[834px] bg-[#2e8b57] pl-[14px] pt-[12px] text-[14.5px] leading-5 text-[#efefef]">
          <div className="font-bold">Benefits</div>
          <ul className="tracking-[0.1px]">
            {[
              "Provide edible fruits (apples, pears, serviceberries).",
              "Support biodiversity and local food production.",
              "Regulate temperature and improve the landscape.",
            ].map((item) => (
              <li key={item} className="flex items-center pl-[10px]">
                <span className="mr-[5px] size-[5px] rounded-full bg-black" />
                {item}
              </li>
            ))}
          </ul>
        </div>
      </section>

      <section className="mt-5 flex pl-[6px]">
        <MapPanel />
        <div className="ml-5 flex flex-col pt-[13px]">
          <div className="flex flex-col gap-[18.5px] pl-[4px] text-[13.5px] leading-[18px] text-[#323232]">
            <div>
              <h2 className="text-[20px] leading-[25px] tracking-[0.36px] text-black">Understand the Data</h2>
              <p className="tracking-[-0.03px]">Scroll and zoom to various parts of the map to see the different trees.</p>
            </div>
            <p className="tracking-[-0.02px]">Use the filters at the top of the map to filter for tree species or ownership. Fruit trees currently grown in Kitchener include crabapples, hackberries, serviceberries and pears.</p>
            <p>Click on the icons below and either click, draw a line, or draw an area on the map to see how trees are nearby.</p>
          </div>
          <LocationCard />
        </div>
      </section>
    </main>
  );
}
